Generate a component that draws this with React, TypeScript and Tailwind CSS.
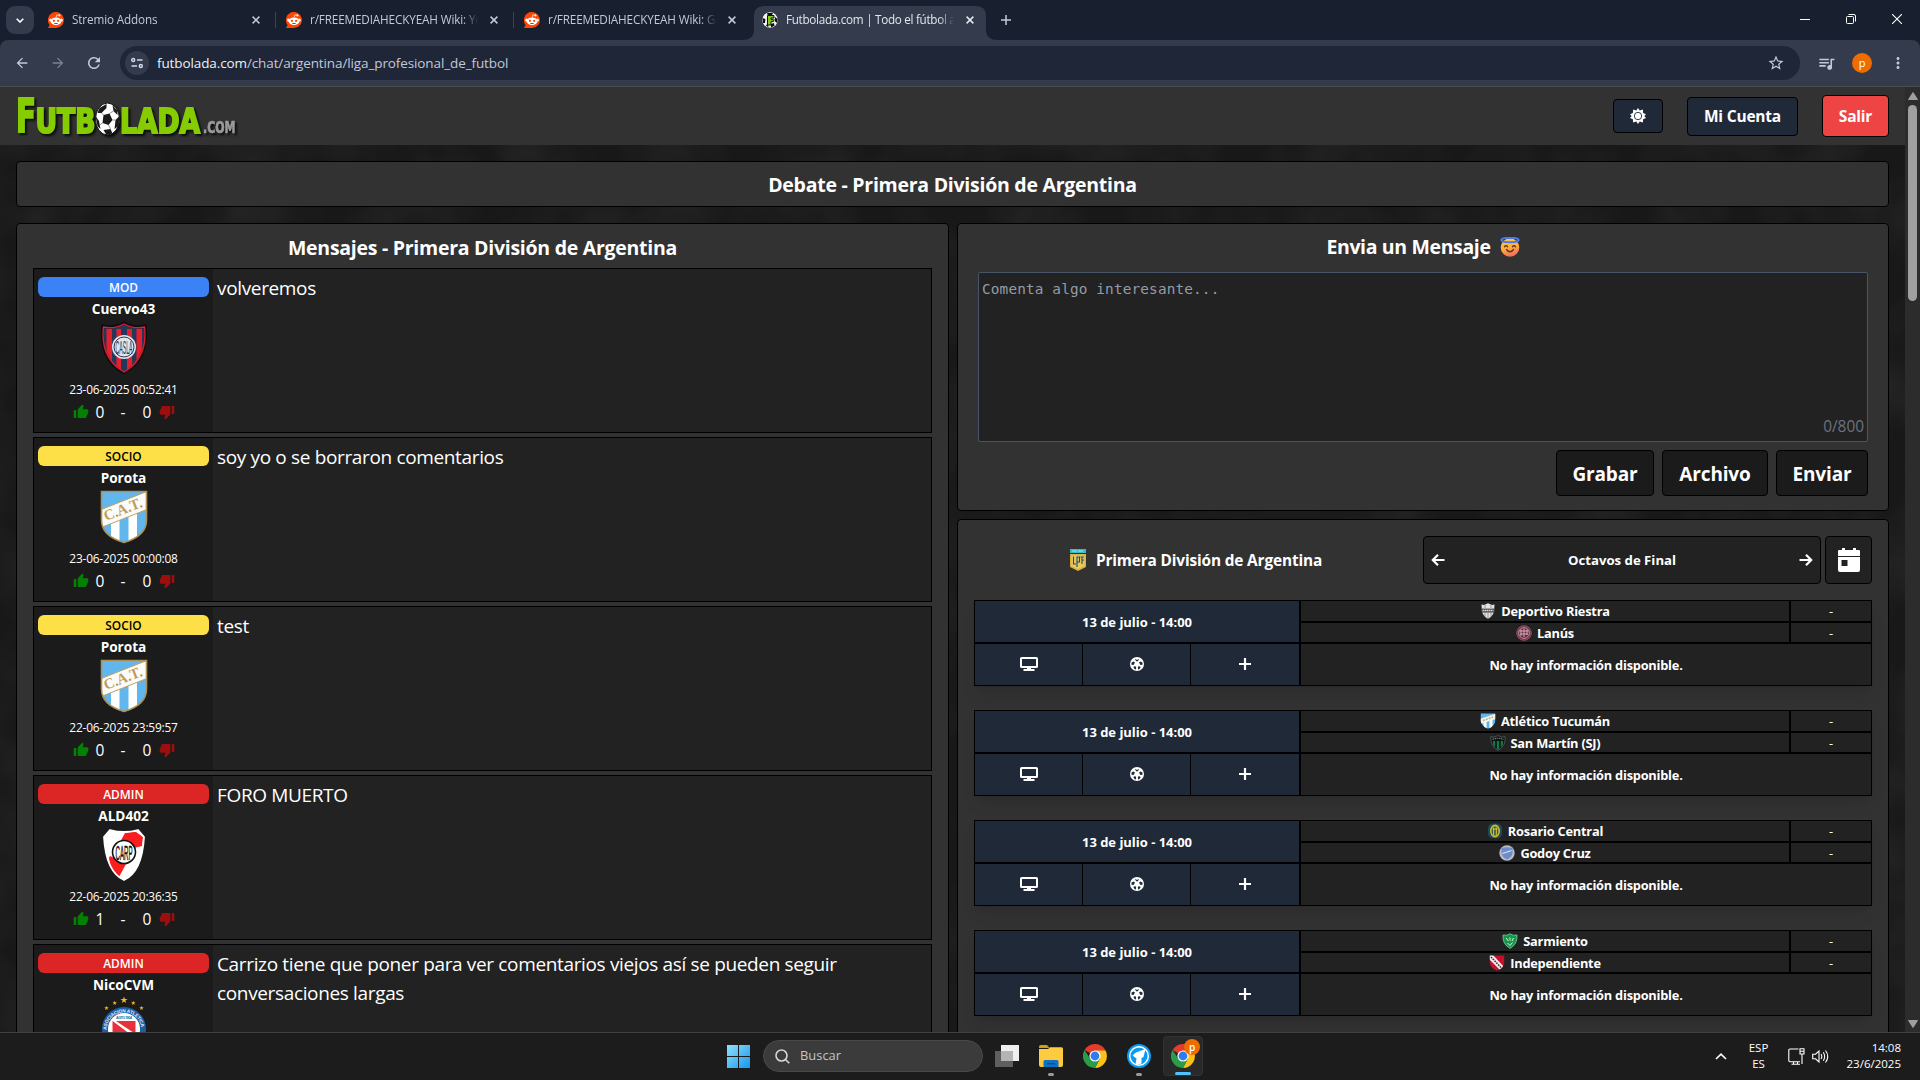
import React from "react";
import { RiThumbUpFill, RiThumbDownFill } from "react-icons/ri";
import { MdArrowBack, MdArrowForward, MdRefresh, MdStarBorder, MdQueueMusic, MdMoreVert } from "react-icons/md";

/* ---------- browser icons ---------- */

const Reddit = () => (
  <svg viewBox="0 0 16 16" className="size-4 shrink-0">
    <path d="M0 16 L1.6 13 A8 8 0 1 1 8 16 Z" fill="#ff4500" />
    <circle cx="2.6" cy="8" r="1.5" fill="#fff" />
    <circle cx="13.4" cy="8" r="1.5" fill="#fff" />
    <ellipse cx="8" cy="9.3" rx="5.3" ry="3.9" fill="#fff" />
    <path d="M8 5.5 L8.9 2.8 L11 3.3" stroke="#fff" strokeWidth=".7" fill="none" />
    <circle cx="11.4" cy="3.4" r="1.1" fill="#fff" />
    <circle cx="5.9" cy="8.8" r="1.1" fill="#ff4500" />
    <circle cx="10.1" cy="8.8" r="1.1" fill="#ff4500" />
    <path d="M5.8 11 Q8 12.7 10.2 11 Z" fill="#222" />
  </svg>
);

const SiteFavicon = () => (
  <svg viewBox="0 0 16 16" className="size-4 shrink-0">
    <circle cx="8" cy="8" r="7.7" fill="#f4f4f4" />
    <path d="M5 1 L11 1 L9.5 4 L6 4 Z M0.6 6 L3.4 7 L3 11 L1 11 Z M13 5 L15.6 7 L15 11 L12.5 9 Z M9 12 L12 11 L12.5 13.8 L9 15.5 Z M3.5 13 L6 12.5 L6.5 15.4 Z" fill="#111" />
    <path d="M5.500 3.500 H12 V6 H9 V7.4 H11.3 V9.6 H9 V13 H5.500 Z" fill="#84cc16" stroke="#111" strokeWidth="1" />
  </svg>
);

const Close = ({ className = "" }: { className?: string }) => (
  <svg viewBox="0 0 8 8" className={`size-2 shrink-0 ${className}`}>
    <path d="M.6 .6 L7.4 7.4 M7.4 .6 L.6 7.4" stroke="currentColor" strokeWidth="1.5" />
  </svg>
);

const Tab = ({ icon, title, active = false }: { icon: React.ReactNode; title: string; active?: boolean }) => (
  <div className={`relative flex h-[34px] w-[238px] items-start pt-[5px] ${active ? "text-[#e3e6ee]" : "text-[#c3c9d8]"}`}>
    {active && (
      <svg viewBox="0 0 256 34" className="absolute top-0 -left-3 h-[34px] w-64">
        <path d="M0 34 Q12 34 12 24 V10 Q12 0 22 0 H234 Q244 0 244 10 V24 Q244 34 256 34 Z" fill="#333b4c" />
      </svg>
    )}
    <div className={`relative flex items-center ${active ? "pl-2" : "pl-2.5"}`}>
      {icon}
      <div
        className={`ml-2 w-[170px] overflow-hidden text-[11.7px] whitespace-nowrap [mask-image:linear-gradient(90deg,#000_90%,transparent_99%)] ${
          active ? "tracking-[-0.29px]" : "tracking-[-0.12px]"
        }`}
      >
        {title}
      </div>
      <Close className="ml-2.5" />
    </div>
  </div>
);

const BrowserChrome = () => (
  <div className="shrink-0 bg-[#18202f]">
    <div className="flex h-10 items-start pt-1.5 pl-1.5">
      <div className="flex h-7 w-7 items-center justify-center rounded-[9px] bg-[#333b4c]">
        <svg viewBox="0 0 8 5" className="h-[5px] w-2">
          <path d="M.7 .7 L4 4 L7.3 .7" stroke="#fff" strokeWidth="1.6" fill="none" />
        </svg>
      </div>
      <div className="ml-1 flex">
        <Tab icon={<Reddit />} title="Stremio Addons" />
        <div className="mt-1.5 -ml-px h-4 w-px bg-[#3b4457]" />
        <Tab icon={<Reddit />} title="r/FREEMEDIAHECKYEAH Wiki: You" />
        <div className="mt-1.5 -ml-px h-4 w-px bg-[#3b4457]" />
        <Tab icon={<Reddit />} title="r/FREEMEDIAHECKYEAH Wiki: Ga" />
        <div className="ml-[2px] flex">
          <Tab icon={<SiteFavicon />} title="Futbolada.com | Todo el fútbol al" active />
        </div>
      </div>
      <svg viewBox="0 0 10 10" className="mt-[9px] ml-[9px] size-2.5">
        <path d="M5 0 V10 M0 5 H10" stroke="#c3c9d8" strokeWidth="1.5" />
      </svg>
      <div className="ml-auto flex items-center gap-9 pt-2 pr-[18px] text-white">
        <svg viewBox="0 0 10 10" className="size-2.5"><path d="M0 5.5 H10" stroke="currentColor" /></svg>
        <svg viewBox="0 0 10 10" className="size-2.5">
          <rect x=".5" y="2.5" width="7" height="7" rx="1" fill="none" stroke="currentColor" />
          <path d="M2.5 .5 H8 Q9.5 .5 9.5 2 V7.5" fill="none" stroke="currentColor" />
        </svg>
        <svg viewBox="0 0 10 10" className="size-2.5"><path d="M0 0 L10 10 M10 0 L0 10" stroke="currentColor" strokeWidth="1.1" /></svg>
      </div>
    </div>
    <div className="flex h-[46px] items-center rounded-t-[8px] bg-[#333b4c] pl-3.5 text-[#c3c9d8]">
      <MdArrowBack className="size-4" />
      <MdArrowForward className="ml-5 size-4 text-[#7a8295]" />
      <MdRefresh className="ml-[19px] size-[18px]" />
      <div className="ml-[17px] flex h-[34px] w-[1680px] items-center rounded-full bg-[#1e2637] pr-[15px] pl-[5px]">
        <div className="flex size-6 items-center justify-center rounded-full bg-[#333b4c]">
          <svg viewBox="0 0 12 12" className="size-3" fill="none" stroke="#d5dae6" strokeWidth="1.4">
            <circle cx="2.2" cy="3" r="1.5" /><path d="M6 3 H11.5 M.5 9 H6" /><circle cx="9.8" cy="9" r="1.5" />
          </svg>
        </div>
        <div className="ml-2 text-[13.5px] tracking-[-0.11px] text-[#c3c9d8]">
          <span className="text-[#eef0f5]">futbolada.com</span>/chat/argentina/liga_profesional_de_futbol
        </div>
        <MdStarBorder className="ml-auto size-[18px]" />
      </div>
      <MdQueueMusic className="ml-[17px] size-[19px]" />
      <div className="ml-[16px] flex size-5 items-center justify-center rounded-full bg-[#ef6c00] pb-px text-[11px] leading-none text-white">p</div>
      <MdMoreVert className="ml-[17px] size-[18px]" />
    </div>
    <div className="h-px bg-[#4a4d55]" />
  </div>
);

/* ---------- site header ---------- */

const BallArt = () => (
  <g>
    <ellipse cx="12" cy="16" rx="12" ry="16" fill="#fff" stroke="#111" strokeWidth="1" />
    <path d="M9 12 L15 10.500 L18 17 L14 22 L8 20 Z" fill="#1a1a1a" transform="translate(-1 0)" />
    <path d="M4 5 L11 1 L11 5 L6 10 L2 10 Z M17 2 L22 8 L22 12 L18 8 Z M20 17 L24 13 L23 23 L19 26 Z M0 13 L3.500 18 L5 26 L2 23 Z M8 27 L15 26 L17 30.500 L11 32 Z" fill="#1a1a1a" />
    <path d="M8 12 L6 10 M14 10.500 L18 8 M17 17 L20 17 M13 22 L15 26 M7 20 L4 22" stroke="#666" strokeWidth=".7" />
  </g>
);

const Logo = () => (
  <svg viewBox="0 0 222 42" className="h-[42px] w-[222px] drop-shadow-[2px_2px_1px_#0c0c0c]">
    <g fill="#85cc00" stroke="#85cc00" strokeWidth="2.200" strokeLinejoin="miter" fontFamily="DejaVu Sans" fontWeight="700">
      <text x="0" y="35" fontSize="46" textLength="20" lengthAdjust="spacingAndGlyphs">F</text>
      <text x="19.500" y="35.500" fontSize="34" textLength="60" lengthAdjust="spacingAndGlyphs">UTB</text>
      <text x="104" y="35.500" fontSize="34" textLength="80" lengthAdjust="spacingAndGlyphs">LADA</text>
    </g>
    <g transform="translate(79.500 6)"><BallArt /></g>
    <text x="187" y="35.500" fontFamily="DejaVu Sans" fontWeight="700" fontSize="15" textLength="32.500" lengthAdjust="spacingAndGlyphs" fill="#9a9a9a" stroke="#9a9a9a" strokeWidth=".7">.COM</text>
  </svg>
);

const Gear = () => (
  <svg viewBox="0 0 16 16" className="size-4">
    <path d="M8 0 L9.7 2.6 L12.9 1.400 L13.100 5 L16 6.200 L14.300 8 L16 9.900 L13.100 11.200 L12.900 14.600 L9.700 13.500 L8 16 L6.300 13.500 L3.100 14.600 L2.900 11.200 L0 9.900 L1.700 8 L0 6.200 L2.900 5 L3.100 1.400 L6.300 2.600 Z" fill="#fff" />
    <circle cx="8" cy="8" r="3.700" fill="#fff" stroke="#1f2937" strokeWidth=".9" />
  </svg>
);

const SiteHeader = () => (
  <div className="flex h-[58px] items-center justify-between bg-[#323232] pr-4 pl-4">
    <div className="pt-1"><Logo /></div>
    <div className="flex items-center gap-6 text-[15.5px] font-bold tracking-[-0.2px] text-white">
      <div className="flex h-[34px] w-[50px] items-center justify-center rounded border border-black bg-[#1f2937]"><Gear /></div>
      <div className="flex h-[39px] w-[111px] items-center justify-center rounded border border-black bg-[#1f2937] pt-px">Mi Cuenta</div>
      <div className="flex h-[42px] w-[67px] items-center justify-center rounded border border-black bg-[#ef4444] pt-0.5">Salir</div>
    </div>
  </div>
);

/* ---------- club crests ---------- */

const SanLorenzo = () => (
  <svg viewBox="0 0 48 54" className="h-[54px] w-12">
    <defs>
      <clipPath id="casla"><path d="M3 5 Q14 8 24 2 Q34 8 45 5 Q49 38 24 52 Q-1 38 3 5 Z" /></clipPath>
    </defs>
    <g clipPath="url(#casla)">
      <path d="M0 0 H48 V54 H0 Z" fill="#263859" />
      <path d="M6.500 8 H12 V54 H6.500 Z M16.500 8 H21 V54 H16.500 Z M27 8 H32 V54 H27 Z M36.500 8 H42 V54 H36.500 Z" fill="#e5202e" />
    </g>
    <path d="M3 5 Q14 8 24 2 Q34 8 45 5 Q49 38 24 52 Q-1 38 3 5 Z" fill="none" stroke="#0c0c12" strokeWidth="3" />
    <path d="M3.500 6 Q14 8.500 24 3 Q34 8.500 44.500 6 Q48 37 24 51 Q0 37 3.500 6 Z" fill="none" stroke="#d91f2d" strokeWidth="1.400" />
    <circle cx="24" cy="26" r="12" fill="#dfe5ec" />
    <circle cx="24" cy="26" r="10" fill="none" stroke="#263859" strokeWidth="1" />
    <text x="15.500" y="32.500" textLength="17" lengthAdjust="spacingAndGlyphs" fontFamily="Liberation Sans" fontSize="18" fill="#263859">CASLA</text>
  </svg>
);

const Tucuman = () => (
  <svg viewBox="0 0 48 54" className="h-[54px] w-12">
    <defs>
      <clipPath id="cat"><path d="M1.500 1.500 H46.500 V30 Q46.500 46 24 53 Q1.500 46 1.500 30 Z" /></clipPath>
    </defs>
    <g clipPath="url(#cat)">
      <path d="M0 0 H48 V54 H0 Z" fill="#62b6ee" />
      <path d="M11 24 H19.500 V54 H11 Z M28.500 20 H37 V54 H28.500 Z" fill="#fff" />
      <path d="M0 20 L48 1 V19 L0 38 Z" fill="#fbfcfa" stroke="#c0a164" strokeWidth="1" />
    </g>
    <path d="M1.500 1.500 H46.500 V30 Q46.500 46 24 52.500 Q1.500 46 1.500 30 Z" fill="none" stroke="#ae9055" strokeWidth="1.600" />
    <text x="6" y="31" transform="rotate(-21 6 31)" textLength="40" lengthAdjust="spacingAndGlyphs" fontFamily="Liberation Serif" fontSize="15" fontWeight="700" fill="#c09a57">C.A.T.</text>
  </svg>
);

const River = () => (
  <svg viewBox="0 0 48 54" className="h-[54px] w-12">
    <defs>
      <clipPath id="carp"><path d="M10 2 Q24 6 38 2 L44 9 Q42 44 24 52 Q6 44 4 9 Z" /></clipPath>
    </defs>
    <g clipPath="url(#carp)">
      <path d="M0 0 H48 V54 H0 Z" fill="#fff" />
      <path d="M25 5 Q30 4 36 4 L43 9 L42 18 L34 20 L20 14 Z M10 28 L26 36 L19 49 Q10 44 9 30 Z" fill="#fa1e1e" />
    </g>
    <path d="M10 2 Q24 6 38 2 L44 9 Q42 44 24 52 Q6 44 4 9 Z" fill="none" stroke="#fff" strokeWidth="1.800" />
    <circle cx="24" cy="24" r="11.500" fill="#fff" stroke="#111" strokeWidth="1.600" />
    <text x="15.500" y="31.500" textLength="17" lengthAdjust="spacingAndGlyphs" fontFamily="Liberation Sans" fontSize="21" fill="#111" stroke="#111" strokeWidth=".5">CARP</text>
  </svg>
);

const Argentinos = () => (
  <svg viewBox="0 0 48 54" className="h-[54px] w-12">
    {[[24, 3, 3.6], [14.700, 6, 2.300], [33.300, 6, 2.300], [6.500, 11, 2.300], [41.500, 11, 2.300]].map(([x, y, r]) => (
      <path key={x} transform={`translate(${x} ${y}) scale(${r})`} fill="#f5b324" d="M0 -1 L.25 -.3 L1 -.3 L.4 .13 L.6 .85 L0 .42 L-.6 .85 L-.4 .13 L-1 -.3 L-.25 -.3 Z" />
    ))}
    <circle cx="24" cy="32" r="22" fill="#1c5fa5" />
    <path id="aaaj" d="M6.500 33 A17.500 17.500 0 0 1 41.500 33" fill="none" />
    <text fontFamily="Liberation Sans" fontSize="4.800" fontWeight="700" fill="#e8f0f8">
      <textPath href="#aaaj" textLength="52">ASOCIACION ATLETICA</textPath>
    </text>
    <circle cx="24" cy="32" r="16" fill="#fff" />
    <text x="16" y="22" textLength="16" fontFamily="Liberation Sans" fontSize="3.500" fontWeight="700" fill="#1c5fa5">AGTO 1904</text>
    <path d="M12.500 24 H35.500 V44 H12.500 Z" fill="#e6303a" />
    <path d="M12.500 24 H16 L35.500 37 V41 Z" fill="#fff" />
  </svg>
);

/* ---------- messages ---------- */

const roleStyles: Record<string, string> = {
  MOD: "bg-[#3b82f6] text-white",
  SOCIO: "bg-[#fde047] text-black",
  ADMIN: "bg-[#dc2626] text-white",
};

const messages = [
  { role: "MOD", user: "Cuervo43", crest: <SanLorenzo />, date: "23-06-2025 00:52:41", up: 0, down: 0, text: "volveremos" },
  { role: "SOCIO", user: "Porota", crest: <Tucuman />, date: "23-06-2025 00:00:08", up: 0, down: 0, text: "soy yo o se borraron comentarios" },
  { role: "SOCIO", user: "Porota", crest: <Tucuman />, date: "22-06-2025 23:59:57", up: 0, down: 0, text: "test" },
  { role: "ADMIN", user: "ALD402", crest: <River />, date: "22-06-2025 20:36:35", up: 1, down: 0, text: "FORO MUERTO" },
  { role: "ADMIN", user: "NicoCVM", crest: <Argentinos />, date: "", up: 0, down: 0, text: "Carrizo tiene que poner para ver comentarios viejos así se pueden seguir conversaciones largas" },
];

type MessageData = (typeof messages)[number];

const Message = ({ role, user, crest, date, up, down, text }: MessageData) => (
  <div className="flex h-[165px] shrink-0 border border-black bg-[#222]">
    <div className="flex w-[179px] shrink-0 flex-col items-center bg-[#1b1b1b] px-1 pt-2 text-white">
      <div className={`flex h-5 w-full items-center justify-center rounded-md pt-[2px] text-[11.9px] font-semibold ${roleStyles[role]}`}>{role}</div>
      <div className="mt-[3px] h-[18px] text-[13.6px] leading-[18px] font-bold">{user}</div>
      <div className="mt-[3px] h-[54px]">{crest}</div>
      {date && (
        <>
          <div className="mt-[5px] text-[11.9px] leading-[18px] tracking-[-0.2px]">{date}</div>
          <div className="mt-1 flex h-5 items-center text-[15.5px] leading-5">
            <RiThumbUpFill className="size-4 text-[#048004]" />
            <span className="ml-[7px] w-[9px]">{up}</span>
            <span className="ml-4 w-[6px]">-</span>
            <span className="ml-4 w-[9px]">{down}</span>
            <RiThumbDownFill className="ml-[7px] size-4 text-[#9c0f0c]" />
          </div>
        </>
      )}
    </div>
    <div className="px-1 pt-[5px] text-[19px] leading-[29px] tracking-[-0.35px] text-white">
      <div className="w-[640px]">{text}</div>
    </div>
  </div>
);

const MessagesPanel = () => (
  <div className="w-[933px] shrink-0 rounded border border-black bg-[#323232] px-4">
    <div className="flex h-[44px] items-center justify-center pt-[3px] text-[19.5px] font-bold tracking-[-0.27px]">
      Mensajes - Primera División de Argentina
    </div>
    <div className="flex flex-col gap-1">
      {messages.map((m, i) => <Message key={i} {...m} />)}
    </div>
  </div>
);

/* ---------- composer ---------- */

const Angel = () => (
  <svg viewBox="0 0 20 20" className="size-5">
    <defs>
      <linearGradient id="face" x1="0" y1="0" x2=".3" y2="1"><stop offset="0" stopColor="#ffcf45" /><stop offset=".6" stopColor="#ffad3d" /><stop offset="1" stopColor="#f4705c" /></linearGradient>
    </defs>
    <circle cx="10" cy="10.500" r="9.300" fill="url(#face)" />
    <ellipse cx="10" cy="3" rx="8.700" ry="2.300" fill="none" stroke="#4b78ee" strokeWidth="1.900" />
    <path d="M4.500 9.800 Q6 7.500 7.500 9.800 M12.500 9.800 Q14 7.500 15.500 9.800 M6.500 12.500 Q10 17 13.500 12.500" stroke="#5b2c23" strokeWidth="1.300" fill="none" strokeLinecap="round" />
  </svg>
);

const Composer = () => (
  <div className="h-[288px] rounded border border-black bg-[#323232] pt-2 pr-5 pl-5">
    <div className="flex h-[30px] items-center justify-center gap-[9px] text-[19.5px] font-bold tracking-[-0.36px]">
      Envia un Mensaje <Angel />
    </div>
    <div className="mt-2.5 flex h-[170px] flex-col justify-between rounded-[2px] border border-[#475569] bg-[#222] px-[3px] pt-[5px] pb-[2px]">
      <div className="font-['DejaVu_Sans_Mono'] text-[14.4px] leading-[22px] tracking-[0.13px] text-[#949ba6]">Comenta algo interesante...</div>
      <div className="text-right text-[15.4px] leading-6 text-[#6b7280]">0/800</div>
    </div>
    <div className="mt-2 flex justify-end gap-2 text-[19px] font-bold tracking-[-0.15px]">
      <div className="flex h-[46px] w-[98px] items-center justify-center rounded border border-black bg-[#1b1b1b] pt-0.5">Grabar</div>
      <div className="flex h-[46px] w-[106px] items-center justify-center rounded border border-black bg-[#1b1b1b] pt-0.5">Archivo</div>
      <div className="flex h-[46px] w-[92px] items-center justify-center rounded border border-black bg-[#1b1b1b] pt-0.5">Enviar</div>
    </div>
  </div>
);

/* ---------- fixtures ---------- */

const MiniShield = ({ children, id }: { children: React.ReactNode; id: string }) => (
  <svg viewBox="0 0 16 16" className="size-4 shrink-0">
    <defs><clipPath id={id}><path d="M.8 .5 H15.200 V8 Q15 13 8 15.800 Q1 13 .8 8 Z" /></clipPath></defs>
    <g clipPath={`url(#${id})`}>{children}</g>
  </svg>
);

const crests: Record<string, React.ReactNode> = {
  "Deportivo Riestra": (
    <svg viewBox="0 0 16 16" className="size-4 shrink-0">
      <path d="M1.500 1.500 L4 2 L8 .2 L12 2 L14.500 1.500 L14 8 Q13.500 13 8 15.800 Q2.500 13 2 8 Z" fill="#e4e4e4" />
      <path d="M1.500 5.600 H14.500 V9.600 H1.500 Z" fill="#4a4a4a" />
      <path d="M2.500 7.500 H13.500" stroke="#ddd" strokeWidth="1.400" strokeDasharray="1.500 .5" />
      <path d="M5 1.500 V5 M11 1.500 V5 M5 10 V14 M8 10 V15 M11 10 V14" stroke="#777" strokeWidth=".7" />
    </svg>
  ),
  "Lanús": (
    <svg viewBox="0 0 16 16" className="size-4 shrink-0">
      <circle cx="8" cy="8" r="7.700" fill="#6f2b42" />
      <circle cx="8" cy="8" r="7.200" fill="none" stroke="#94616f" strokeWidth=".8" />
      <circle cx="8" cy="8" r="5.400" fill="none" stroke="#c9a9b3" strokeWidth=".8" />
      <path d="M5 4.500 V11 M8 3.500 V12 M3.500 6 H12.500 M4 9 H12 M11 4.500 V10" stroke="#d6bcc4" strokeWidth=".9" />
    </svg>
  ),
  "Atlético Tucumán": (
    <MiniShield id="m-cat">
      <path d="M0 0 H16 V16 H0 Z" fill="#62b6ee" />
      <path d="M3.500 8 H6.500 V16 H3.500 Z M9.500 6 H12.500 V16 H9.500 Z" fill="#fff" />
      <path d="M0 6 L16 .5 V6 L0 11 Z" fill="#f6f3e8" />
      <path d="M3 7.500 L13 4" stroke="#c9ab6c" strokeWidth="1.500" strokeDasharray="2 1" />
    </MiniShield>
  ),
  "San Martín (SJ)": (
    <svg viewBox="0 0 16 16" className="size-4 shrink-0">
      <path d="M.8 1.500 L4 2.200 L8 .6 L12 2.200 L15.200 1.500 Q16 11 8 15.500 Q0 11 .8 1.500 Z" fill="#0d1512" stroke="#56615c" strokeWidth=".8" />
      <path d="M3 6 H5.200 V12.500 L3 9.500 Z M6.800 6 H9.200 V14.500 H6.800 Z M10.800 6 H13 V9.500 L10.800 12.500 Z" fill="#0f7a43" />
      <path d="M2.500 4.500 Q8 2 13.500 4.500" fill="none" stroke="#6d7773" strokeWidth="1.200" strokeDasharray="1.500 .7" />
    </svg>
  ),
  "Rosario Central": (
    <svg viewBox="0 0 16 16" className="size-4 shrink-0">
      <rect x="1" y=".5" width="14" height="15" rx="5" fill="#1d4a58" />
      <ellipse cx="8" cy="8" rx="5" ry="6.500" fill="#cbbd2f" />
      <ellipse cx="8" cy="8" rx="3.400" ry="4.600" fill="#3a5b4a" />
      <path d="M6.600 4.500 V12 M9.300 4.500 V12 M5.500 6 H10.500" stroke="#d8c838" strokeWidth="1" />
    </svg>
  ),
  "Godoy Cruz": (
    <svg viewBox="0 0 16 16" className="size-4 shrink-0">
      <circle cx="8" cy="8" r="7.700" fill="#b9bcc4" />
      <path d="M2.500 3 Q8 1.500 13.500 3 V8 Q13 12 8 14.500 Q3 12 2.500 8 Z" fill="#6e8ccb" />
      <path d="M3.500 8.500 L12.500 5.500" stroke="#dde6f7" strokeWidth="1.300" />
    </svg>
  ),
  Sarmiento: (
    <svg viewBox="0 0 16 16" className="size-4 shrink-0">
      <path d="M1 2 Q5 3 8 .800 Q11 3 15 2 Q15.800 11 8 15.400 Q.2 11 1 2 Z" fill="#129a48" stroke="#7fd09c" strokeWidth=".8" />
      <path d="M4 5 L6.500 8 M8 4.500 V7.500 M11.500 5 L10 8 M5.500 10 L8 12.500 L10.500 9.500" stroke="#d5f2df" strokeWidth="1" fill="none" />
    </svg>
  ),
  Independiente: (
    <MiniShield id="m-cai">
      <path d="M0 0 H16 V16 H0 Z" fill="#c8102e" />
      <path d="M0 0 H4 L15 12 V16 H12 L0 4 Z" fill="#f3eeee" />
      <path d="M2 2 L12 12.500" stroke="#333" strokeWidth="1.600" strokeDasharray="1.600 1" />
    </MiniShield>
  ),
};

const Football = () => (
  <svg viewBox="0 0 14 14" className="size-3.5">
    <circle cx="7" cy="7" r="7" fill="#fff" />
    <path d="M5 1.700 L7 3 L9 1.700 L8 4.200 H6 Z M1.400 5.800 L3.300 4.400 L4.900 5.200 L3.900 7.800 L1.700 8 Z M12.600 5.800 L10.700 4.400 L9.100 5.200 L10.100 7.800 L12.300 8 Z M3.300 9.900 L5.200 9 L6.200 10.500 L5.800 12.500 L4.700 12.200 Z M10.700 9.900 L8.800 9 L7.800 10.500 L8.200 12.500 L9.300 12.200 Z" fill="#1f2937" />
  </svg>
);

const Monitor = () => (
  <svg viewBox="0 0 18 14" className="h-3.5 w-[18px]">
    <rect x="1" y="1" width="16" height="9" rx=".6" fill="none" stroke="#fff" strokeWidth="2" />
    <path d="M7 10.500 H11 V12 H14.500 V14 H3.500 V12 H7 Z" fill="#fff" />
  </svg>
);

const Arrow = ({ flip = false }: { flip?: boolean }) => (
  <svg viewBox="0 0 14 12" className={`h-3 w-3.5 ${flip ? "-scale-x-100" : ""}`} fill="none" stroke="#fff" strokeWidth="2.200">
    <path d="M1.500 6 H13.500 M7 .8 L1.800 6 L7 11.200" />
  </svg>
);

const TeamRow = ({ name, className }: { name: string; className: string }) => (
  <div className={`flex ${className}`}>
    <div className="flex w-[490px] items-center justify-center gap-[5px] border border-black bg-[#222]">
      {crests[name]}
      <span className="pt-[2px]">{name}</span>
    </div>
    <div className="flex flex-1 items-center justify-center border border-black bg-[#222] pt-0.5 font-normal">-</div>
  </div>
);

const Fixture = ({ home, away }: { home: string; away: string }) => (
  <div className="flex h-[86px] text-[12.8px] font-bold tracking-[-0.22px] shadow-lg">
    <div className="flex w-[326px] flex-col">
      <div className="flex h-[43px] items-center justify-center border border-black bg-[#1f2937] pt-0.5 text-[13px] tracking-[-0.02px]">13 de julio - 14:00</div>
      <div className="grid h-[43px] grid-cols-3 border border-black bg-[#1f2937]">
        <div className="flex items-center justify-center border-r border-black pb-px"><Monitor /></div>
        <div className="flex items-center justify-center border-r border-black pb-px"><Football /></div>
        <div className="flex items-center justify-center pb-px">
          <svg viewBox="0 0 12 12" className="size-3"><path d="M6 0 V12 M0 6 H12" stroke="#fff" strokeWidth="2.200" /></svg>
        </div>
      </div>
    </div>
    <div className="flex flex-1 flex-col">
      <TeamRow name={home} className="h-[22px]" />
      <TeamRow name={away} className="h-[21px]" />
      <div className="flex h-[43px] items-center justify-center border border-black bg-[#222] pt-0.5">No hay información disponible.</div>
    </div>
  </div>
);

const LeagueCrest = () => (
  <svg viewBox="0 0 16 22" className="h-[22px] w-4">
    <path d="M0 0 H16 V4 H0 Z" fill="#35bcd3" />
    <path d="M2 2 H14" stroke="#a5e6ef" strokeWidth="1.200" strokeDasharray="5 1" />
    <path d="M0 5 H16 V18 Q12 20 8 22 Q4 20 0 18 Z" fill="#d9b13f" />
    <path d="M1.500 6.500 H14.500 V17 L8 20 L1.500 17 Z" fill="#ecca62" />
    <path d="M3.500 7.500 V15 H6 M7 18 V8 H9.500 V13 H7 M10.500 8 H14 M12 8 V15 M12 11 H14" stroke="#1e4a5c" strokeWidth="1.100" fill="none" />
  </svg>
);

const CalendarIcon = () => (
  <svg viewBox="0 0 22 24" className="h-6 w-[22px]" fill="#fff">
    <path d="M0 3 Q0 2 1 2 H4 V0 H7 V2 H15 V0 H18 V2 H21 Q22 2 22 3 V8 H0 Z" />
    <path fillRule="evenodd" d="M0 9 H22 V22 Q22 24 20 24 H2 Q0 24 0 22 Z M3.500 12 V18 H9.500 V12 Z" />
  </svg>
);

const fixtures = [
  ["Deportivo Riestra", "Lanús"],
  ["Atlético Tucumán", "San Martín (SJ)"],
  ["Rosario Central", "Godoy Cruz"],
  ["Sarmiento", "Independiente"],
];

const FixturesPanel = () => (
  <div className="mt-2 h-[560px] rounded border border-black bg-[#323232] px-4 pt-4">
    <div className="flex h-12">
      <div className="flex w-[449px] items-center justify-center gap-2.5 pr-[5px] text-[15.4px] font-bold tracking-[-0.15px]">
        <LeagueCrest /> <span className="pt-0.5">Primera División de Argentina</span>
      </div>
      <div className="flex w-[398px] items-center justify-between rounded border border-black bg-[#222] px-[7px] text-[13.2px] font-bold">
        <Arrow />
        <span className="pt-0.5">Octavos de Final</span>
        <Arrow flip />
      </div>
      <div className="ml-1 flex w-[47px] items-center justify-center rounded border border-black bg-[#222]"><CalendarIcon /></div>
    </div>
    <div className="mt-4 flex flex-col gap-6">
      {fixtures.map(([home, away]) => <Fixture key={home} home={home} away={away} />)}
    </div>
  </div>
);

const Scrollbar = () => (
  <div className="flex w-[15px] shrink-0 flex-col items-center bg-[#2c2c2c] pt-[5px] pb-1">
    <svg viewBox="0 0 10 8" className="h-2 w-2.5"><path d="M5 .5 L9.500 7.500 H.5 Z" fill="#9f9f9f" stroke="#9f9f9f" strokeLinejoin="round" /></svg>
    <div className="mt-[5px] h-[196px] w-[9px] rounded-full bg-[#9f9f9f]" />
    <svg viewBox="0 0 10 8" className="mt-auto h-2 w-2.5"><path d="M5 7.500 L9.500 .5 H.5 Z" fill="#9f9f9f" stroke="#9f9f9f" strokeLinejoin="round" /></svg>
  </div>
);

const Texture = () => (
  <svg className="absolute inset-0 h-full w-full">
    <filter id="grain">
      <feTurbulence type="fractalNoise" baseFrequency="0.014" numOctaves="3" seed="4" />
      <feColorMatrix values="0 0 0 0 1  0 0 0 0 1  0 0 0 0 1  0.1 0 0 0 -0.035" />
    </filter>
    <rect width="100%" height="100%" filter="url(#grain)" />
  </svg>
);

/* ---------- taskbar ---------- */

const ChromeIcon = () => (
  <svg viewBox="0 0 24 24" className="size-6">
    <path d="M12 12 L1.600 6 A12 12 0 0 1 22.400 6 Z" fill="#e33b2e" />
    <path d="M12 6.500 H22.600 A12 12 0 0 1 12 24 L16.800 14.700 Z" fill="#fbc116" />
    <path d="M1.600 6 L7.200 14.700 L12 17.500 L16.800 14.700 L12 24 A12 12 0 0 1 1.600 6 Z" fill="#2a9d48" />
    <circle cx="12" cy="12" r="5.600" fill="#fff" />
    <circle cx="12" cy="12" r="4.400" fill="#2f7bf0" />
  </svg>
);

const Taskbar = () => (
  <div className="relative flex h-12 shrink-0 items-center border-t border-[#404040] bg-[#1c1c1c] pb-px text-white">
    <div className="flex h-full items-center pl-[727px]">
      <svg viewBox="0 0 23 23" className="size-[23px]">
        <defs><linearGradient id="win" x1="0" y1="0" x2="1" y2="1"><stop offset="0" stopColor="#8fe0fb" /><stop offset="1" stopColor="#1797ee" /></linearGradient></defs>
        <path d="M0 0 H11 V11 H0 Z M12 0 H23 V11 H12 Z M0 12 H11 V23 H0 Z M12 12 H23 V23 H12 Z" fill="url(#win)" />
      </svg>
      <div className="ml-[13px] flex h-8 w-[220px] items-center rounded-full border border-[#494949] bg-[#3b3b3b] pl-[11px]">
        <svg viewBox="0 0 15 15" className="size-[15px]" fill="none" stroke="#d5d5d5" strokeWidth="1.600">
          <circle cx="6.500" cy="6.500" r="5.500" /><path d="M10.500 10.500 L14.300 14.300" />
        </svg>
        <span className="ml-[10px] text-[12.9px] text-[#c4c4c4]">Buscar</span>
      </div>
      <svg viewBox="0 0 24 22" className="ml-3 h-[22px] w-6">
        <path d="M6 0 H24 V16 H6 Z" fill="#efefef" />
        <path d="M0 6 H18 V22 H0 Z" fill="#5f5f5f" />
        <path d="M6 6 H18 V16 H6 Z" fill="#b4b4b4" />
      </svg>
      <div className="relative ml-5">
        <svg viewBox="0 0 24 22" className="h-[22px] w-6">
          <path d="M0 1.500 Q0 0 1.500 0 H8 L10.500 3 H0 Z" fill="#d69a13" />
          <path d="M0 4 H9 L11 2.300 H22.500 Q24 2.300 24 4 V20 Q24 22 22 22 H2 Q0 22 0 20 Z" fill="#fccb3f" />
          <path d="M4.500 22 V16.500 Q4.500 15 6 15 H18 Q19.500 15 19.500 16.500 V22 Z" fill="#0f71c4" />
          <path d="M8 18.700 H16" stroke="#0a4e8c" strokeWidth="1.400" />
        </svg>
        <div className="absolute -bottom-[9px] left-[9px] h-[3px] w-1.5 rounded-full bg-[#9a9a9a]" />
      </div>
      <div className="ml-5"><ChromeIcon /></div>
      <div className="relative ml-5">
        <svg viewBox="0 0 24 24" className="size-6">
          <circle cx="12" cy="12" r="12" fill="#0c9bf2" />
          <circle cx="12" cy="12" r="9.300" fill="#0c9bf2" stroke="#fff" strokeWidth="1.400" />
          <path d="M18.500 5 L16.500 13 L14.500 14 L14.500 19.500 L10 21 L8.500 20.500 L9.500 14.500 L5.500 11.500 L9 8.500 Z" fill="#fff" />
        </svg>
        <div className="absolute -bottom-[8px] left-[9px] h-[3px] w-1.5 rounded-full bg-[#9a9a9a]" />
      </div>
      <div className="relative ml-3 flex size-10 items-center justify-center rounded border border-[#333] bg-[#292929]">
        <ChromeIcon />
        <div className="absolute top-[2px] right-[2px] flex size-4 items-center justify-center rounded-full bg-[#ef6c00] pb-px text-[10px] leading-none font-semibold">p</div>
        <div className="absolute bottom-0 left-[11px] h-[3px] w-4 rounded-full bg-[#4cc2ff]" />
      </div>
    </div>
    <div className="ml-auto flex items-center pr-[19px] text-[11.500px] leading-4">
      <svg viewBox="0 0 12 7" className="h-[7px] w-3"><path d="M1 6 L6 1.200 L11 6" stroke="#fff" strokeWidth="1.600" fill="none" /></svg>
      <div className="ml-5 w-[23px] text-center">ESP<br />ES</div>
      <svg viewBox="0 0 17 17" className="ml-[18px] size-[17px]" fill="none" stroke="#fff" strokeWidth="1.100">
        <path d="M10.500 1 H2 Q.8 1 .8 2.200 V12.600 Q.8 13.800 2 13.800 H12" />
        <path d="M5.500 14 V16 M9.500 14 V16 M3.500 16.200 H12" />
        <path d="M12 .8 H16 V6 H12 Z M12 3.300 H16 M14 6 V16" />
      </svg>
      <svg viewBox="0 0 17 15" className="ml-[7px] h-[15px] w-[17px]" fill="none" stroke="#fff" strokeWidth="1.100">
        <path d="M.7 5.200 H3.500 L7 2 V13 L3.500 9.800 H.7 Z" />
        <path d="M9 5 Q10.600 7.500 9 10 M11.300 3.300 Q14 7.500 11.300 11.700 M13.500 1.500 Q18 7.500 13.500 13.500" />
      </svg>
      <div className="ml-4 w-[56px] text-right whitespace-nowrap">14:08<br />23/6/2025</div>
    </div>
  </div>
);

export default function App() {
  return (
    <div className="flex h-[1080px] w-[1920px] flex-col overflow-hidden bg-[#1a1a1a] font-['Open_Sans','Noto_Sans',sans-serif] text-white">
      <BrowserChrome />
      <div className="flex min-h-0 flex-1 overflow-hidden">
        <div className="relative flex-1 overflow-hidden bg-[#181818]">
          <Texture />
          <div className="relative">
            <SiteHeader />
            <div className="mx-4 mt-4 flex h-[46px] items-center justify-center rounded border border-black bg-[#323232] pt-0.5 text-[19.500px] font-bold tracking-[-0.26px]">
              Debate - Primera División de Argentina
            </div>
            <div className="mt-4 flex gap-2 px-4">
              <MessagesPanel />
              <div className="flex-1">
                <Composer />
                <FixturesPanel />
              </div>
            </div>
          </div>
        </div>
        <Scrollbar />
      </div>
      <Taskbar />
    </div>
  );
}
